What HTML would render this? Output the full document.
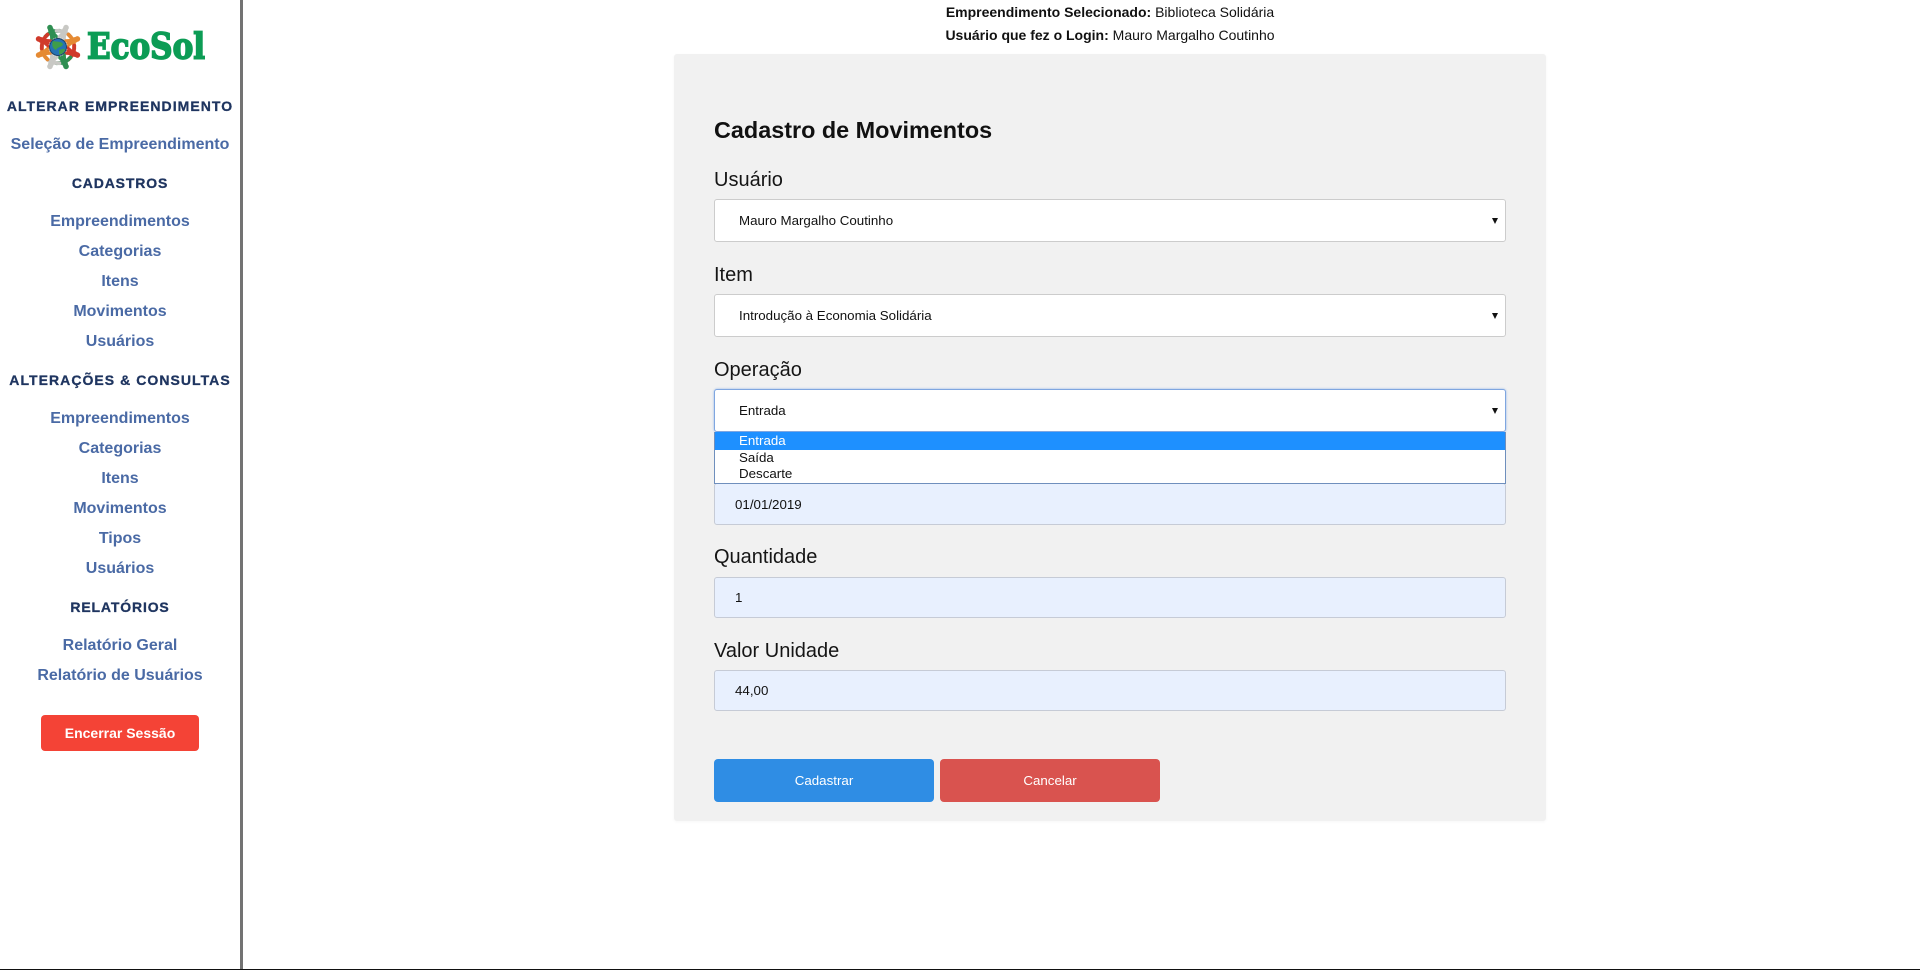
<!DOCTYPE html>
<html lang="pt-BR"><head><meta charset="utf-8"><title>Cadastro de Movimentos</title>
<style>
html,body{margin:0;padding:0;background:#fff;width:1920px;height:970px;overflow:hidden;font-family:"Liberation Sans",Arial,sans-serif;color:#111}
.a{position:absolute;white-space:nowrap}
#side{position:absolute;left:0;top:0;width:240px;height:969px;border-right:3px solid #737373}
.n,.h{position:absolute;left:0;width:240px;text-align:center;height:30px;line-height:30px;white-space:nowrap}
.n{font-size:16px;font-weight:bold;color:#4a6aa5}
.h{font-size:14px;font-weight:bold;color:#1f3560;letter-spacing:.85px;-webkit-text-stroke:.3px #1f3560}
.h.w{letter-spacing:1.05px}
#exit{position:absolute;left:41px;top:715px;width:158px;height:36px;line-height:36px;background:#f44336;border-radius:4px;color:#fff;font-size:14px;font-weight:bold;text-align:center}
#line{position:absolute;left:0;top:969px;width:1920px;height:1px;background:#111}
#panel{position:absolute;left:674px;top:54px;width:872px;height:767px;background:#f1f1f1;border-radius:3px;box-shadow:0 1px 3px rgba(0,0,0,.04)}
.lb{position:absolute;left:714px;font-size:20px;line-height:24px;color:#151515;white-space:nowrap}
.sel{position:absolute;left:714px;width:790px;height:41px;background:#fff;border:1px solid #ccc;border-radius:3px;font-size:13.33px;line-height:41px;text-indent:24px;color:#111}
.sel i{position:absolute;right:7px;top:18px;width:0;height:0;border-left:3.5px solid transparent;border-right:3.5px solid transparent;border-top:6px solid #111}
.in{position:absolute;left:714px;width:790px;height:39px;background:#e8f0fe;border:1px solid #c6cbd6;border-radius:3px;font-size:13.33px;line-height:39px;text-indent:20px;color:#111}
.b{position:absolute;top:759px;width:220px;height:43px;line-height:43px;border-radius:4px;color:#fff;font-size:13.33px;text-align:center}
</style></head><body>
<div id="side">
<svg class="a" style="left:33px;top:22px" width="50" height="50" viewBox="0 0 50 50">
<defs><g id="p" fill="none" stroke="currentColor" stroke-linecap="round">
<path d="M-7.5 -14.5 L0 -17 L7.5 -14.5" stroke-width="3.8"/>
<path d="M0 -19 L0 -12" stroke-width="5.6"/>
<path d="M-1.8 -13 L-3 -9.5 M1.8 -13 L3 -9.5" stroke-width="2.8"/>
<circle cx="0" cy="-21" r="2.8" fill="currentColor" stroke="none"/>
</g></defs>
<g transform="translate(25 25)">
<use href="#p" transform="rotate(-22.5)" style="color:#2f8f52"/>
<use href="#p" transform="rotate(22.5)" style="color:#c8c8c4"/>
<use href="#p" transform="rotate(67.5)" style="color:#e58a33"/>
<use href="#p" transform="rotate(112.5)" style="color:#d03a2b"/>
<use href="#p" transform="rotate(157.5)" style="color:#2f8f52"/>
<use href="#p" transform="rotate(202.5)" style="color:#c8c8c4"/>
<use href="#p" transform="rotate(247.5)" style="color:#e58a33"/>
<use href="#p" transform="rotate(292.5)" style="color:#d03a2b"/>
</g>
<circle cx="25" cy="25" r="9" fill="#fff"/>
<circle cx="25" cy="25" r="8.5" fill="#2673b4" stroke="#1c3f63" stroke-width="1"/>
<path d="M20 19 C24 20 28 19 30 22 C29 26 25 24 23 28 C20 27 18 23 20 19 Z M26 28 C29 27 32 26 32 28 C31 31 28 33 26 32 Z" fill="#3f9d4a"/>
</svg>
<div class="a" style="left:87px;top:25px;font-family:'DejaVu Serif',serif;font-weight:bold;font-size:31px;line-height:44px;color:#0c9c55;-webkit-text-stroke:1.5px #0c9c55;transform:scale(1,1.14);transform-origin:0 50%">EcoSol</div>
<div class="h w" style="top:91px">ALTERAR EMPREENDIMENTO</div>
<div class="n" style="top:130px">Seleção de Empreendimento</div>
<div class="h" style="top:168px">CADASTROS</div>
<div class="n" style="top:207px">Empreendimentos</div>
<div class="n" style="top:237px">Categorias</div>
<div class="n" style="top:267px">Itens</div>
<div class="n" style="top:297px">Movimentos</div>
<div class="n" style="top:327px">Usuários</div>
<div class="h w" style="top:365px">ALTERAÇÕES &amp; CONSULTAS</div>
<div class="n" style="top:404px">Empreendimentos</div>
<div class="n" style="top:434px">Categorias</div>
<div class="n" style="top:464px">Itens</div>
<div class="n" style="top:494px">Movimentos</div>
<div class="n" style="top:524px">Tipos</div>
<div class="n" style="top:554px">Usuários</div>
<div class="h" style="top:592px">RELATÓRIOS</div>
<div class="n" style="top:631px">Relatório Geral</div>
<div class="n" style="top:661px">Relatório de Usuários</div>
<div id="exit">Encerrar Sessão</div>
</div>
<div id="line"></div>
<div class="a" style="left:300px;width:1620px;top:1px;text-align:center;font-size:14px;line-height:23px"><b>Empreendimento Selecionado:</b> Biblioteca Solidária<br><b>Usuário que fez o Login:</b> Mauro Margalho Coutinho</div>
<div id="panel"></div>
<div class="a" style="left:714px;top:116px;font-size:23.4px;font-weight:bold;line-height:28px;color:#111">Cadastro de Movimentos</div>
<div class="lb" style="top:168px">Usuário</div>
<div class="sel" style="top:199px">Mauro Margalho Coutinho<i></i></div>
<div class="lb" style="top:263px">Item</div>
<div class="sel" style="top:294px">Introdução à Economia Solidária<i></i></div>
<div class="lb" style="top:358px">Operação</div>
<div class="sel" style="top:389px;height:41px;border:1px solid #7fa6e0;box-shadow:0 0 2px #8fb4ea">Entrada<i></i></div>
<div class="in" style="top:483px;height:40px;line-height:42px">01/01/2019</div>
<div class="a" style="left:714px;top:432px;width:790px;height:51px;background:#fff;border:1px solid #6f8fbd;border-top:0;font-size:13.33px;line-height:16px;text-indent:24px">
<div style="background:#1e90ff;color:#fff;height:18px;line-height:18px">Entrada</div><div>Saída</div><div>Descarte</div></div>
<div class="lb" style="top:545px">Quantidade</div>
<div class="in" style="top:577px">1</div>
<div class="lb" style="top:639px">Valor Unidade</div>
<div class="in" style="top:670px">44,00</div>
<div class="b" style="left:714px;background:#2f8de4">Cadastrar</div>
<div class="b" style="left:940px;background:#d9534f">Cancelar</div>
</body></html>
